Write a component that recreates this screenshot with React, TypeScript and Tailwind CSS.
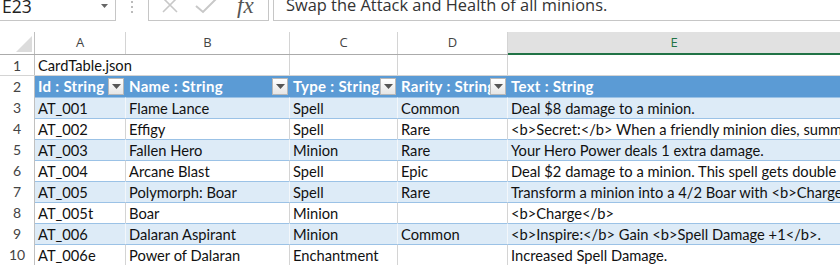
import React from "react"

const cellFont = { fontFamily: '"Lato", "Liberation Sans", sans-serif' }
const uiFont = { fontFamily: '"Open Sans", "Noto Sans", sans-serif' }

const widths = ["w-[91px]", "w-[164px]", "w-[108px]", "w-[110px]"]

const heads = ["Id : String", "Name : String", "Type : String", "Rarity : String", "Text : String"]

const rows = [
    ["AT_001", "Flame Lance", "Spell", "Common", "Deal $8 damage to a minion."],
    ["AT_002", "Effigy", "Spell", "Rare", "<b>Secret:</b> When a friendly minion dies, summon a random minion with the same Cost."],
    ["AT_003", "Fallen Hero", "Minion", "Rare", "Your Hero Power deals 1 extra damage."],
    ["AT_004", "Arcane Blast", "Spell", "Epic", "Deal $2 damage to a minion. This spell gets double bonus from Spell Damage."],
    ["AT_005", "Polymorph: Boar", "Spell", "Rare", "Transform a minion into a 4/2 Boar with <b>Charge</b>."],
    ["AT_005t", "Boar", "Minion", "", "<b>Charge</b>"],
    ["AT_006", "Dalaran Aspirant", "Minion", "Common", "<b>Inspire:</b> Gain <b>Spell Damage +1</b>."],
    ["AT_006e", "Power of Dalaran", "Enchantment", "", "Increased Spell Damage."],
]

const RowNum = ({ n }: { n: number }) => (
    <div className="w-[35px] shrink-0 bg-white flex items-center justify-center border-r border-[#c0c0c0] text-[14px] font-normal tracking-normal text-[#444]" style={cellFont}>
        {n}
    </div>
)

const FilterButton = () => (
    <div className="absolute right-[2px] top-[2px] w-[16px] h-[17px] border border-[#b8b8b8] bg-gradient-to-b from-white to-[#e6e6e6] flex items-center justify-center">
        <svg width="9" height="5" viewBox="0 0 9 5">
            <path d="M0 0 L9 0 L4.5 5 Z" fill="#555" />
        </svg>
    </div>
)

export default function App() {
    return (
        <div className="w-[840px] h-[266px] overflow-hidden bg-white relative">
            {/* formula bar */}
            <div className="flex h-[21px]">
                <div className="w-[116px] shrink-0 border-r border-b border-[#c6c6c6] flex items-start justify-between pl-[2px] pr-[7px]">
                    <span className="text-[17.5px] leading-[16px] mt-[-2px] text-[#222]" style={uiFont}>E23</span>
                    <svg width="7" height="4" viewBox="0 0 7 4" className="mt-[4px]">
                        <path d="M0 0 L7 0 L3.5 4 Z" fill="#666" />
                    </svg>
                </div>
                <div className="w-[32px] shrink-0 flex flex-col items-center gap-[3px] pt-[1px]">
                    <div className="w-[2px] h-[2px] bg-[#bbb]" />
                    <div className="w-[2px] h-[2px] bg-[#bbb]" />
                    <div className="w-[2px] h-[2px] bg-[#bbb]" />
                </div>
                <div className="w-[121px] shrink-0 border border-t-0 border-[#c6c6c6] flex items-start">
                    <svg width="40" height="18" viewBox="0 0 40 18" className="ml-[8px]">
                        <path d="M6 -2 L20 12 M20 -2 L6 12" stroke="#c8c8c8" strokeWidth="1.6" fill="none" />
                    </svg>
                    <svg width="40" height="18" viewBox="0 0 40 18" className="-ml-[4px]">
                        <path d="M3 6 L10 12 L24 -2" stroke="#c8c8c8" strokeWidth="2" fill="none" />
                    </svg>
                    <span className="ml-[4px] mt-[-4px] text-[23px] leading-[20px] italic text-[#555]" style={{ fontFamily: '"Liberation Serif", serif' }}>fx</span>
                </div>
                <div className="flex-1 ml-[4px] border-l border-b border-[#c6c6c6] pl-[12px]">
                    <span className="text-[16.4px] leading-[16px] block mt-[-3px] text-[#333]" style={uiFont}>
                        Swap the Attack and Health of all minions.
                    </span>
                </div>
            </div>

            {/* column headers */}
            <div className="flex h-[23px] mt-[11px] border-b border-[#ababab] text-[13px] text-[#444]" style={uiFont}>
                <div className="w-[35px] shrink-0 border-r border-[#c0c0c0] relative">
                    <svg width="16" height="16" viewBox="0 0 16 16" className="absolute left-[16px] top-[4px]">
                        <path d="M16 0 L16 16 L0 16 Z" fill="#dcdcdc" />
                    </svg>
                </div>
                {["A", "B", "C", "D"].map((c, i) => (
                    <div key={c} className={`${widths[i]} shrink-0 border-r border-[#d4d4d4] flex items-center justify-center`}>
                        {c}
                    </div>
                ))}
                <div className="flex-1 bg-[#e1e1e1] border-b-2 border-[#217346] flex items-center justify-center text-[#217346] -mb-[1px]">
                    E
                </div>
            </div>

            {/* row 1 */}
            <div className="flex h-[21px] border-b border-[#d4d4d4] text-[14.7px] text-[#111]" style={cellFont}>
                <RowNum n={1} />
                <div className="w-[255px] shrink-0 border-r border-[#d4d4d4] flex items-center pl-[3px]">CardTable.json</div>
                <div className="w-[108px] shrink-0 border-r border-[#d4d4d4]" />
                <div className="w-[110px] shrink-0 border-r border-[#d4d4d4]" />
                <div className="flex-1" />
            </div>

            {/* row 2: table header */}
            <div className="flex h-[21px] text-[15px] tracking-[0.3px] font-bold text-white" style={cellFont}>
                <RowNum n={2} />
                {heads.map((h, i) => (
                    <div key={h} className={`${i < 4 ? widths[i] + " shrink-0" : "flex-1"} relative bg-[#5b9bd5] flex items-center pl-[3px] overflow-hidden whitespace-nowrap`}>
                        {h}
                        {i < 4 && <FilterButton />}
                    </div>
                ))}
            </div>

            {/* data rows */}
            {rows.map((r, ri) => {
                const band = ri % 2 === 0
                return (
                    <div key={r[0]} className={`flex h-[21px] text-[14.7px] text-[#111] ${band ? "bg-[#ddebf7]" : "bg-white"}`} style={cellFont}>
                        <RowNum n={ri + 3} />
                        {r.map((v, ci) => (
                            <div
                                key={ci}
                                className={`${ci < 4 ? widths[ci] + " shrink-0 border-r" : "flex-1"} ${band ? "border-[#f3f7fb]" : "border-[#d4d4d4]"} border-t border-t-[#9bc2e6] flex items-center pl-[3px] overflow-hidden whitespace-nowrap`}
                            >
                                {v}
                            </div>
                        ))}
                    </div>
                )
            })}
        </div>
    )
}
